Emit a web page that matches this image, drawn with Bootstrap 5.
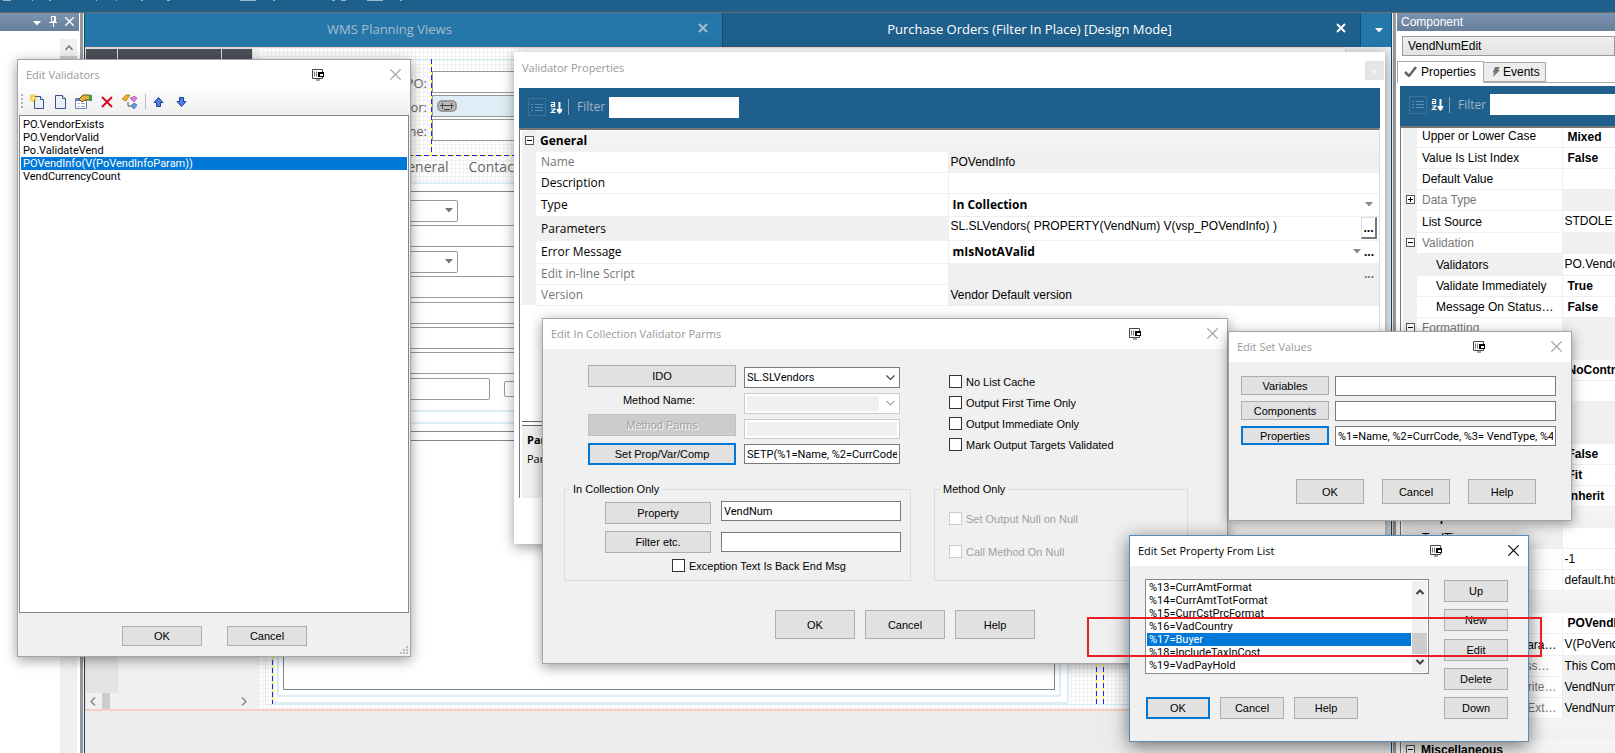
<!DOCTYPE html>
<html lang="en">
<head>
<meta charset="utf-8">
<meta name="viewport" content="width=device-width, initial-scale=1">
<title>Purchase Orders - Design Mode</title>
<link href="https://cdn.jsdelivr.net/npm/bootstrap@5.3.0/dist/css/bootstrap.min.css" rel="stylesheet">
<style>
:root{--navy:#1f5f8b;--tab:#2577aa;--face:#f0f0f0;--sel:#0078d7;--ui:"Open Sans","Noto Sans",sans-serif;--ms:"Liberation Sans",Arial,sans-serif}
body{font-family:var(--ms);font-size:12px;line-height:14px;color:#000;background:#ececec}
button,input,select{font:inherit;color:inherit}
button{line-height:14px}
svg{display:block;flex:none}
a{color:inherit;text-decoration:none}
.seg{font-family:var(--ui);font-size:11px}
/* application frame */
.topbar{height:13px;background:var(--navy);border-bottom:1px solid #6b6b6b}
.pane-left{width:80px;background:#fff}
.pane-right{width:219px;background:#fff}
.splitter{width:3px;background:#999;flex:none}
.pane-head{height:18px;background:linear-gradient(#7a93b1,#687f9a);color:#fff}
.icon-btn{border:0;background:none;padding:0;color:inherit;display:flex}
.side-scroll{width:17px;background:#f0f0f0;margin-left:60px}
.side-thumb{background:#cdcdcd;height:300px}
.work{border-left:1px solid #124a70;border-right:1px solid #124a70;margin:0 1px}
.doc-tabs{height:34px;background:var(--tab);font-family:var(--ui);font-size:13px;line-height:18px;color:#a9bccb}
.doc-tab{flex:1 1 8px;padding-right:14px;padding-bottom:2px}
.doc-tab svg{margin-bottom:2px}
.doc-tab.on{flex-basis:0;background:var(--navy);color:#fff;border-left:1px solid #174c72}
.doc-more{width:31px;border-left:1px solid #174c72;color:#fff;padding:2px 0 0 6px}
/* design surface */
.canvas{margin:0 45px 42px 0;border:1px solid #f9cfc4;border-bottom-width:2px}
.tree{width:173px;background:#f0f0f0}
.tree-head{height:28px;background:#4d4f59;margin-right:6px}
.tree-head i{border-right:1px solid #ddd;border-top:1px solid #ddd}
.tree-gutter{width:32px;background:#e4e4e4}
.tree-scroll{height:16px;color:#888;padding:0 12px 0 4px}
.tree-scroll b{width:8px;background:#cdcdcd;margin-left:6px}
.surface{padding:11px 5px 4px 6px;background:repeating-linear-gradient(90deg,#f2f2f2 0 1px,transparent 1px 4px),repeating-linear-gradient(#f2f2f2 0 1px,#fff 1px 4px)}
.panel-outer{border:1px solid #d2e9f1;border-right:0}
.head-rows{padding-top:11px;height:95px;display:grid;grid-template-columns:161px 400px;column-gap:5px;row-gap:2px;align-content:start}
.head-rows label{font-family:var(--ui);font-size:13px;line-height:20px;padding-top:2px;text-align:right;color:#666}
.line-in{display:block;border:1px solid #999;background:#fff;height:22px;padding:0 4px;border-radius:0}
.line-in.blue{background:#dfeef6}
.form-tabs{font-family:var(--ui);font-size:14px;color:#666;gap:20px;padding-left:131px;height:27px;line-height:24px}
.tab-body{width:797px;margin-left:6px;border:2px solid #dcedf5;border-radius:3px;background:#fff;padding:0 6px 5px 3px}
.group1{border:solid #dcedf5;border-width:0 2px 2px;height:228px;padding:7px 4px 9px}
.group2{border:2px solid #dcedf5;border-radius:3px;margin-top:10px;padding:7px 4px 5px}
.rows{height:200px}
.w-dd{width:175px;border-radius:2px}.w-fd{width:207px;border-radius:2px}
.memo{border:1px solid #7f8590;width:100%;background:#fff;display:block;resize:none}
.guide{position:absolute}
.guide.v{width:1px;background:repeating-linear-gradient(#22f 0 5px,#ff0 5px 8px)}
.guide.h{height:1px;background:repeating-linear-gradient(90deg,#22f 0 5px,#ff0 5px 8px)}
/* windows */
.win{position:absolute;background:var(--face);border:1px solid #a5a5a5;box-shadow:0 3px 12px rgba(0,0,0,.4);font-size:11px}
.win-title{height:30px;background:#fff;color:#999;padding:0 9px 1px 8px}
.win-title h2{font:inherit;margin:0;flex:1}
.win-title .sysicon{margin-right:66px}
.active-win{border-color:#5b8ab5;box-shadow:0 4px 18px rgba(0,0,0,.55)}
.active-win .win-title{color:#000}
.btn-w{border:1px solid #adadad;border-radius:0;background:#e1e1e1;padding:0;text-align:center;height:22px;display:block;white-space:nowrap}
.btn-w.focus{border:2px solid var(--sel)}
.btn-w:disabled{background:#ccc;border-color:#bfbfbf;color:#a0a0a0;text-shadow:1px 1px 0 #fff}
.txt{border:1px solid #7a7a7a;border-radius:0;background:#fff;height:20px;padding:0 2px;display:block;min-width:0}
.txt:disabled{background:#f0f0f0;border-color:#ccc;box-shadow:inset 0 0 0 2px #fff}
.txt,.lst .list-group-item{font-family:Roboto,var(--ms)}
.combo{appearance:none;height:21px;background:#fff url("data:image/svg+xml,%3Csvg xmlns='http://www.w3.org/2000/svg' width='9' height='6'%3E%3Cpath d='M.5.5l4 4 4-4' fill='none' stroke='%23444' stroke-width='1.2'/%3E%3C/svg%3E") no-repeat right 4px center}
.combo:disabled{opacity:1;background:#f0f0f0 url("data:image/svg+xml,%3Csvg xmlns='http://www.w3.org/2000/svg' width='20' height='19'%3E%3Cpath fill='%23fff' d='M0 0h20v19H0z'/%3E%3Cpath d='M7.500 7l4 4 4-4' fill='none' stroke='%23aaa' stroke-width='1.2'/%3E%3C/svg%3E") no-repeat right center}
.chk{display:flex;align-items:center;gap:4px;height:13px;white-space:nowrap}
.chk input{appearance:none;width:13px;height:13px;border:1px solid #333;background:#fff;margin:0}
.chk.off{color:#a0a0a0}.chk.off input{border-color:#ccc}
.lst{background:#fff;border:1px solid #828790;border-radius:0}
.lst .list-group-item{border:0;border-radius:0!important;padding:0 2px;margin:0!important;height:13px;line-height:13px;color:#000;background:none;font-size:11px;white-space:nowrap}
.lst .list-group-item.active{background:var(--sel);color:#fff}
.grp{border:1px solid #dcdcdc;height:99px;padding:0;margin:0}
.grp legend{float:none;width:auto;font-size:11px;line-height:14px;margin:0 0 0 5px;padding:0 3px;height:14px}
.w80{width:80px}.w68{width:68px}.w64{width:64px}.w88{width:88px}.w106{width:106px}
.h20{height:20px}.h25{height:25px}.h29{height:29px}.h19{height:19px}
/* validators window */
#w-val{left:17px;top:59px;width:394px}
.strip{height:25px;background:linear-gradient(#fbfbfb,#efefef);padding:0 0 2px 3px}
.strip .grip{width:2px;height:16px;background:repeating-linear-gradient(#b5b5b5 0 2px,transparent 2px 4px)}
.strip .sep{width:1px;height:15px;background:#bbb}
.val-list{min-height:498px;margin:0 1px;padding:2px 1px}
.val-foot{padding:13px 0 10px 104px;gap:25px}
.sizer{position:absolute;right:2px;bottom:2px}
/* validator properties */
#w-prop{left:514px;top:52px;width:871px;border:0;background:#fff;padding:0 5px 46px;font-size:12px}
.prop-title{height:36px;color:#999;padding:0 0 4px 3px;margin-right:-4px}
.xbox{width:19px;height:19px;background:#e5e5e5;color:#fff;border:0;padding:0;line-height:17px;font-size:11px;margin-top:4px}
.filterbar{height:40px;background:var(--navy);color:#9fb6c8;padding:0 0 2px 9px;flex:none}
.filterbar > *{flex:none}
.filterbar label{font-family:var(--ui);font-size:12px;margin:0 5px 0 8px;width:27px}
.filterbar .vr{width:1px;min-height:16px;align-self:center;background:#8aa5ba;opacity:1;margin-left:5px}
.filterbar .box{width:18px;height:18px;border:1px solid #3a7199;display:grid;place-items:center}
.filterbar input{border:0;height:21px;width:130px;background:#fff;padding:0 3px}
.pg{border:solid #777;border-width:2px 0 0 1px;padding-left:2px}
.pg table{table-layout:fixed;width:100%;border-collapse:collapse;line-height:14px}
.pg td,.pg th{height:21px;padding:1px 5px 0;font-weight:400;white-space:nowrap;overflow:hidden;border-bottom:1px solid #efefef;background:#fff}
.pg th.g{background:#f0f0f0;border:0;padding:0 0 0 3px}
.pg td{border-left:1px solid #efefef;padding:0 2px}
.pg .t > *{height:22px}
.pg .t3 > *{height:23px}
.pg .tt > *{height:24px}
.pg .dim > th{color:#777}
.pg .ro > td{background:#f0f0f0}
.pg .hd > *{background:linear-gradient(#f6f6f6,#f0f0f0);border-color:#f0f0f0}
.pg .hd > th:not(.g){padding-left:4px}
.pg .cur > th:not(.g){background:#f0f0f0}
.pg td b{padding-left:2px}
.pane-right td b{padding-left:3px}
.pg .sub{padding-left:19px}
.pg .first > *{height:18px}
.pm{width:9px;height:9px;border:1px solid #555;background:linear-gradient(#000,#000) center/5px 1px no-repeat #fff;display:block;padding:0}
.pm.plus{background:linear-gradient(#000,#000) center/5px 1px no-repeat,linear-gradient(#000,#000) center/1px 5px no-repeat #fff}
.seg-t th,.seg-t td b{font-family:var(--ui);font-size:12px}
.seg-t .ends{padding-right:2px}
.dots{font-weight:700;border:0;background:none;padding:0;width:16px;line-height:12px;align-self:stretch}
.dots.up{border:1px solid #ddd;border-right:2px solid #777;border-bottom:2px solid #777;background:#fff;height:22px}
.helpbox{background:#f0f0f0;border-top:1px solid #666;height:73px;padding:4px 5px;line-height:19px;font-size:11px;font-family:var(--ui)}
.helpgap{margin-top:115px;height:4px;border-top:1px solid #666}
/* collection parms, set values, property list */
#w-parm{left:542px;top:318px;width:686px}
#w-set{left:1228px;top:331px;width:344px}
#w-list{left:1129px;top:535px;width:400px}
.callout{position:absolute;left:1087px;top:617px;width:455px;height:40px;border:2px solid #ec1c24;pointer-events:none}
.col-scroll{width:15px;background:#f0f0f0}
/* component pane */
.comp-sel{appearance:none;height:20px;border:1px solid #999;border-radius:0;background:linear-gradient(#f0f0f0,#e2e2e2);width:100%;padding:0 5px}
.ptab{border:1px solid #aaa;padding:0 5px;height:20px;background:#ededed;align-self:end;white-space:nowrap}
.ptab.on{height:22px;background:#fff;border-bottom-color:#fff}
</style>
</head>
<body class="vh-100 overflow-hidden d-flex flex-column position-relative">
<svg width="0" height="0" class="position-absolute">
 <symbol id="i-sys" viewBox="0 0 12 12"><path d="M.5.500h10v9H.5zM4 11h4" fill="none" stroke="#444"/><path d="M2.500 2.500v5M4.500 2.500v5" stroke="#777"/><path d="M6 3h6v5H6z" fill="#000"/><path d="M8 5h3v2H8z" fill="#fff"/></symbol>
 <symbol id="i-x" viewBox="0 0 10 10"><path d="M.3.300l9.400 9.400M9.700.300L.3 9.700" stroke="currentColor" fill="none"/></symbol>
 <symbol id="i-list" viewBox="0 0 12 9"><path d="M0 1.500h2M4 1.500h8M0 4.500h2M4 4.500h8M0 7.500h2M4 7.500h8" stroke="#5e8fb3"/></symbol>
 <symbol id="i-az" viewBox="0 0 12 13"><path d="M.5 1.500h3.500v4H1V3.500h3M.5 8h4L1 11.500h4" fill="none" stroke="#fff" stroke-width="1.200"/><path d="M9 1v7" stroke="#fff" stroke-width="2"/><path d="M6 8h6l-1 3-2 2-2-2z" fill="#fff"/></symbol>
 <symbol id="i-tri" viewBox="0 0 8 5"><path d="M0 0h8L4 4.500z" fill="currentColor"/></symbol>
</svg>

<header class="topbar">
 <svg width="420" height="1" fill="#9bb4c7"><path d="M3 0h8v1H3zM32 0h1v1h-1zM49 0h2v1h-2zM96 0h1v1h-1zM116 0h1v1h-1zM141 0h2v1h-2zM167 0h3v1h-3zM240 0h16v1h-16zM273 0h2v1h-2zM332 0h3v1h-3zM341 0h5v1h-5zM367 0h16v1h-16zM400 0h2v1h-2z"/></svg>
</header>

<div class="d-flex flex-grow-1" style="min-height:0">
 <aside class="pane-left d-flex flex-column flex-shrink-0">
  <div class="pane-head d-flex align-items-center justify-content-end gap-2" style="padding-right:5px;margin-right:1px">
   <button class="icon-btn" aria-label="Menu"><svg width="8" height="5" class="mt-1"><use href="#i-tri"/></svg></button>
   <button class="icon-btn" aria-label="Pin"><svg width="8" height="11" fill="none" stroke="#fff"><path d="M2.500.5h4v5h-4zM5.500 1v4M0 6.500h8M4.500 7v4"/></svg></button>
   <button class="icon-btn" aria-label="Close pane"><svg width="9" height="9" viewBox="0 0 10 10" stroke-width="1.500"><use href="#i-x"/></svg></button>
  </div>
  <div class="side-scroll flex-grow-1 mt-2">
   <div class="d-flex justify-content-center" style="height:17px;padding-top:6px"><svg width="8" height="6" fill="none" stroke="#777" stroke-width="1.500"><path d="M.5 5L4 1l3.500 4"/></svg></div>
   <div class="side-thumb"></div>
  </div>
 </aside>
 <div class="splitter"></div>

 <main class="work flex-grow-1 d-flex flex-column" style="min-width:0">
  <nav class="doc-tabs d-flex">
   <div class="doc-tab d-flex align-items-center">
    <a href="#" class="flex-fill text-center pe-1">WMS Planning Views</a>
    <button class="icon-btn" aria-label="Close tab"><svg width="10" height="10" viewBox="0 0 10 10" fill="none" stroke="currentColor" stroke-width="2"><path d="M1 1l8 8M9 1L1 9"/></svg></button>
   </div>
   <div class="doc-tab on d-flex align-items-center">
    <a href="#" class="flex-fill text-center">Purchase Orders (Filter In Place) [Design Mode]</a>
    <button class="icon-btn" aria-label="Close tab"><svg width="10" height="10" viewBox="0 0 10 10" fill="none" stroke="currentColor" stroke-width="2"><path d="M1 1l8 8M9 1L1 9"/></svg></button>
   </div>
   <div class="doc-more d-flex align-items-center justify-content-center"><button class="icon-btn" aria-label="More tabs"><svg width="8" height="5"><use href="#i-tri"/></svg></button></div>
  </nav>

  <div class="canvas flex-grow-1 d-flex" style="min-height:0">
   <div class="tree d-flex flex-column">
    <div class="tree-head d-flex"><i style="width:32px"></i><i style="width:104px"></i><i class="flex-fill"></i></div>
    <div class="flex-grow-1 d-flex"><div class="tree-gutter"></div></div>
    <div class="tree-scroll d-flex align-items-center">
     <svg width="6" height="9" fill="none" stroke="currentColor" stroke-width="1.500"><path d="M5 .5L1 4.500l4 4"/></svg><b class="align-self-stretch"></b>
     <svg class="ms-auto" width="6" height="9" fill="none" stroke="currentColor" stroke-width="1.500"><path d="M1 .5l4 4-4 4"/></svg>
    </div>
   </div>
   <div class="surface flex-grow-1 position-relative d-flex flex-column">
    <div class="panel-outer flex-grow-1 d-flex flex-column">
     <div class="head-rows">
      <label for="f-po">PO:</label><input id="f-po" class="line-in">
      <label for="f-vendor">Vendor:</label><div class="line-in blue" id="f-vendor"><svg width="20" height="12" class="mt-1"><rect x="1" y="1" width="18" height="10" rx="4" fill="#bbb" stroke="#999" stroke-width="2"/><path d="M3 5.500h14M5.500 3v6M14.500 3v6M7 9.500h6" stroke="#444" fill="none"/></svg></div>
      <label for="f-name">Name:</label><input id="f-name" class="line-in">
     </div>
     <div class="form-tabs d-flex"><a href="#">General</a><a href="#">Contacts</a></div>
     <div class="tab-body flex-grow-1 d-flex flex-column">
      <div class="group1">
       <div style="border-top:1px solid #888;height:9px"></div>
       <div class="rows d-flex flex-column justify-content-between">
        <div class="line-in w-dd d-flex align-items-center justify-content-end text-secondary"><svg width="8" height="5"><use href="#i-tri"/></svg></div>
        <div class="line-in"></div>
        <div class="line-in w-dd d-flex align-items-center justify-content-end text-secondary"><svg width="8" height="5"><use href="#i-tri"/></svg></div>
        <div class="line-in"></div><div class="line-in"></div><div class="line-in"></div><div class="line-in"></div>
        <div class="d-flex align-items-center" style="gap:14px"><div class="line-in w-fd"></div><div class="line-in w-fd" style="height:16px"></div></div>
       </div>
      </div>
      <div class="group2 flex-grow-1 d-flex flex-column"><div style="border-top:1px solid #888;height:9px"></div><textarea class="memo flex-grow-1" aria-label="Notes"></textarea></div>
     </div>
    </div>
    <i class="guide v" style="left:172px;top:11px;height:97px"></i>
    <i class="guide h" style="left:13px;top:107px;right:100px"></i>
    <i class="guide v" style="left:13px;top:108px;bottom:5px"></i>
    <i class="guide v" style="left:837px;top:11px;bottom:5px"></i>
    <i class="guide v" style="left:844px;top:11px;bottom:5px"></i>
   </div>
  </div>
 </main>

 <div class="splitter"></div>
 <aside class="pane-right d-flex flex-column flex-shrink-0 overflow-hidden">
  <div class="pane-head" style="margin-left:1px;padding:2px 4px">Component</div>
  <div style="padding:5px 0 0 6px"><select class="comp-sel" aria-label="Component"><option>VendNumEdit</option></select></div>
  <div class="d-flex" style="margin:4px 0 3px 1px;border-bottom:1px solid #aaa;height:23px">
   <a href="#" class="ptab on d-flex align-items-center gap-1" style="margin-bottom:-1px;width:87px;padding:0 6px"><svg width="13" height="11" fill="none" stroke="#666" stroke-width="2.500"><path d="M1 6l4 4 7-9"/></svg>Properties</a>
   <a href="#" class="ptab d-flex align-items-center" style="width:63px;margin-left:-1px;padding:0 7px;gap:2px"><svg width="10" height="10" viewBox="0 0 10 10"><path d="M4 0h5L7 3h2L2 10l1-4H1l3-1H2z" fill="#777"/></svg>Events</a>
  </div>
  <div class="filterbar d-flex align-items-center" style="margin-left:4px">
   <span class="box"><svg width="12" height="9"><use href="#i-list"/></svg></span><svg class="ms-1" width="13" height="13"><use href="#i-az"/></svg><span class="vr"></span>
   <label for="flt2">Filter</label><input id="flt2" type="text">
  </div>
  <div class="pg flex-grow-1 overflow-hidden" style="margin-left:4px">
   <table>
    <colgroup><col style="width:14px"><col style="width:145px"><col></colgroup>
    <tbody>
    <tr class="first"><th class="g"></th><th class="pb-1">Upper or Lower Case</th><td><b>Mixed</b></td></tr>
    <tr><th class="g"></th><th>Value Is List Index</th><td><b>False</b></td></tr>
    <tr><th class="g"></th><th>Default Value</th><td></td></tr>
    <tr class="dim ro"><th class="g"><button class="pm plus" aria-label="Expand"></button></th><th>Data Type</th><td></td></tr>
    <tr class="t"><th class="g"></th><th>List Source</th><td>STDOLE</td></tr>
    <tr class="dim ro"><th class="g"><button class="pm" aria-label="Collapse"></button></th><th>Validation</th><td></td></tr>
    <tr class="t cur"><th class="g"></th><th class="sub">Validators</th><td>PO.VendorExists</td></tr>
    <tr><th class="g"></th><th class="sub">Validate Immediately</th><td><b>True</b></td></tr>
    <tr><th class="g"></th><th class="sub">Message On Status…</th><td><b>False</b></td></tr>
    <tr class="dim ro"><th class="g"><button class="pm" aria-label="Collapse"></button></th><th>Formatting</th><td></td></tr>
    <tr class="ro"><th class="g"></th><th></th><td></td></tr>
    <tr><th class="g"></th><th></th><td><b>NoControl</b></td></tr>
    <tr><th class="g"></th><th></th><td></td></tr>
    <tr class="ro"><th class="g"></th><th></th><td></td></tr>
    <tr class="ro"><th class="g"></th><th></th><td></td></tr>
    <tr><th class="g"></th><th></th><td><b>False</b></td></tr>
    <tr><th class="g"></th><th></th><td><b>Fit</b></td></tr>
    <tr><th class="g"></th><th></th><td><b>Inherit</b></td></tr>
    <tr class="hd"><th class="g"><button class="pm" aria-label="Collapse"></button></th><th><b>Help</b></th><td></td></tr>
    <tr class="cur"><th class="g"></th><th>ToolTip</th><td></td></tr>
    <tr><th class="g"></th><th></th><td>-1</td></tr>
    <tr><th class="g"></th><th></th><td>default.html</td></tr>
    <tr class="hd t"><th class="g"></th><th></th><td></td></tr>
    <tr><th class="g"></th><th></th><td><b>POVendInfo</b></td></tr>
    <tr class="t"><th class="g"></th><th class="text-end">ara…</th><td>V(PoVendInfo</td></tr>
    <tr class="dim ro"><th class="g"></th><th class="text-end" style="padding-right:12px">ss…</th><td>This Component</td></tr>
    <tr class="dim ro"><th class="g"></th><th class="text-end">rite…</th><td>VendNum</td></tr>
    <tr class="dim ro"><th class="g"></th><th class="text-end">Ext…</th><td>VendNum</td></tr>
    <tr class="hd"><th class="g"></th><th></th><td></td></tr>
    <tr class="hd"><th class="g"><button class="pm" aria-label="Collapse"></button></th><th colspan="2"><b>Miscellaneous</b></th></tr>
    </tbody>
   </table>
  </div>
 </aside>
</div>

<!-- Validator Properties -->
<section class="win" id="w-prop">
 <div class="prop-title seg d-flex align-items-center"><h2 class="m-0 flex-fill" style="font:inherit">Validator Properties</h2><button class="xbox" aria-label="Close">x</button></div>
 <div class="filterbar d-flex align-items-center">
  <span class="box"><svg width="12" height="9"><use href="#i-list"/></svg></span><svg class="ms-1" width="13" height="13"><use href="#i-az"/></svg><span class="vr"></span>
  <label for="flt1">Filter</label><input id="flt1" type="text">
 </div>
 <div class="pg" style="border-right:1px solid #ddd">
  <table class="seg-t">
   <colgroup><col style="width:14px"><col style="width:412px"><col></colgroup>
   <tbody>
   <tr class="hd"><th class="g"><button class="pm" aria-label="Collapse"></button></th><th colspan="2"><b>General</b></th></tr>
   <tr class="dim ro"><th class="g"></th><th>Name</th><td>POVendInfo</td></tr>
   <tr><th class="g"></th><th>Description</th><td></td></tr>
   <tr class="t3"><th class="g"></th><th>Type</th><td class="ends"><div class="d-flex align-items-center"><b class="flex-fill">In Collection</b><svg class="me-1" width="8" height="5" color="#888"><use href="#i-tri"/></svg></div></td></tr>
   <tr class="tt cur"><th class="g"></th><th>Parameters</th><td class="ends"><div class="d-flex align-items-center"><span class="flex-fill pb-1">SL.SLVendors( PROPERTY(VendNum) V(vsp_POVendInfo) )</span><button class="dots up">...</button></div></td></tr>
   <tr class="t3"><th class="g"></th><th>Error Message</th><td class="ends"><div class="d-flex align-items-center"><b class="flex-fill">mIsNotAValid</b><svg width="8" height="5" color="#888"><use href="#i-tri"/></svg><button class="dots">...</button></div></td></tr>
   <tr class="dim ro"><th class="g"></th><th>Edit in-line Script</th><td class="ends text-end"><button class="dots text-secondary">...</button></td></tr>
   <tr class="dim ro"><th class="g"></th><th>Version</th><td>Vendor Default version</td></tr>
   </tbody>
  </table>
  <div class="helpgap"></div>
  <div class="helpbox"><b>Parameters</b><br>Parameters</div>
 </div>
</section>

<!-- Edit Validators -->
<section class="win" id="w-val">
 <div class="win-title seg d-flex align-items-center"><h2>Edit Validators</h2><svg class="sysicon" width="12" height="12"><use href="#i-sys"/></svg><button class="icon-btn" aria-label="Close"><svg width="11" height="11"><use href="#i-x"/></svg></button></div>
 <div class="strip d-flex align-items-center">
  <span class="grip"></span>
  <button class="icon-btn" style="margin-left:6px" aria-label="New from wizard"><svg width="16" height="16"><path d="M5.500 2.500h6l3 3v9h-9z" fill="#e8f0fa" stroke="#3a5382"/><path d="M11.500 2.500v3h3" fill="#fff" stroke="#3a5382"/><path d="M4 0v8M0 4h8M1 1l6 6M7 1L1 7" stroke="#f0c020" stroke-width="1.200"/><circle cx="4" cy="4" r="1.500" fill="#fff3a0"/></svg></button>
  <button class="icon-btn" style="margin-left:8px" aria-label="New"><svg width="16" height="16"><path d="M2.500 1.500h7l3 3v10h-10z" fill="#e8f0fa" stroke="#3a5382"/><path d="M9.500 1.500v3h3" fill="#fff" stroke="#3a5382"/></svg></button>
  <button class="icon-btn" style="margin-left:6px" aria-label="Properties"><svg width="17" height="16"><path d="M.5 4.500h11v10H.5z" fill="#fff" stroke="#6a83ad"/><path d="M1 5h11v2H1z" fill="#5a86c8"/><path d="M2.500 9.500h2M6 9.500h4M2.500 12.500h2M6 12.500h4" stroke="#8aa5cf"/><path d="M4 5l4-4h7v5H10L7 8z" fill="#e0b23c" stroke="#6b5420"/><path d="M14 1h3v6h-3z" fill="#3d9a4a"/></svg></button>
  <button class="icon-btn" style="margin-left:9px" aria-label="Delete"><svg width="12" height="12"><path d="M1 1l10 10M11 1L1 11" stroke="#d9001b" stroke-width="1.800"/></svg></button>
  <button class="icon-btn" style="margin-left:9px" aria-label="Hierarchy"><svg width="16" height="16"><path d="M6 8v4h4M8 4h4" stroke="#555" fill="none"/><path d="M0 5l4-4h4L4 7z" fill="#f0b429" stroke="#a06d10" stroke-width=".7"/><path d="M9 5l3-3 3 2-3 4z" fill="#e37fe0" stroke="#a040a0" stroke-width=".7"/><path d="M9 12l3-3 3 2-3 4z" fill="#6a9be8" stroke="#2a5ab0" stroke-width=".7"/></svg></button>
  <span class="sep" style="margin-left:7px"></span>
  <button class="icon-btn" style="margin-left:7px" aria-label="Move up"><svg width="11" height="10"><path d="M5.500.5l4.500 5H7.500v4h-4v-4H1z" fill="#4f7fe0" stroke="#1e429a"/></svg></button>
  <button class="icon-btn" style="margin-left:12px" aria-label="Move down"><svg width="11" height="10"><path d="M5.500 9.500l4.500-5H7.500v-4h-4v4H1z" fill="#4f7fe0" stroke="#1e429a"/></svg></button>
 </div>
 <ul class="lst list-group val-list">
  <li class="list-group-item">PO.VendorExists</li><li class="list-group-item">PO.VendorValid</li><li class="list-group-item">Po.ValidateVend</li><li class="list-group-item active">POVendInfo(V(PoVendInfoParam))</li><li class="list-group-item">VendCurrencyCount</li>
 </ul>
 <div class="val-foot d-flex"><button class="btn-w w80 h20">OK</button><button class="btn-w w80 h20">Cancel</button></div>
 <svg class="sizer" width="8" height="8" fill="#bbb"><path d="M6 0h2v2H6zM3 3h2v2H3zM6 3h2v2H6zM0 6h2v2H0zM3 6h2v2H3zM6 6h2v2H6z"/></svg>
</section>

<!-- Edit In Collection Validator Parms -->
<section class="win" id="w-parm">
 <div class="win-title seg d-flex align-items-center"><h2>Edit In Collection Validator Parms</h2><svg class="sysicon" width="12" height="12"><use href="#i-sys"/></svg><button class="icon-btn" aria-label="Close"><svg width="11" height="11"><use href="#i-x"/></svg></button></div>
 <div class="d-flex" style="padding:16px 0 0 45px">
  <div style="width:148px">
   <button class="btn-w w-100">IDO</button>
   <label for="mname" class="d-block text-center" style="line-height:27px;padding-right:6px">Method Name:</label>
   <button class="btn-w w-100" disabled>Method Parms</button>
   <button class="btn-w w-100 focus" style="margin-top:7px">Set Prop/Var/Comp</button>
  </div>
  <div class="d-flex flex-column ms-2" style="width:156px;gap:5px;padding-top:2px">
   <select class="txt combo" aria-label="IDO"><option>SL.SLVendors</option></select>
   <select class="txt combo" id="mname" disabled><option></option></select>
   <input class="txt" disabled aria-label="Method parms">
   <input class="txt" value="SETP(%1=Name, %2=CurrCode" aria-label="Set">
  </div>
  <div class="d-flex flex-column" style="margin:10px 0 0 49px;gap:8px">
   <label class="chk"><input type="checkbox">No List Cache</label>
   <label class="chk"><input type="checkbox">Output First Time Only</label>
   <label class="chk"><input type="checkbox">Output Immediate Only</label>
   <label class="chk"><input type="checkbox">Mark Output Targets Validated</label>
  </div>
 </div>
 <div class="d-flex" style="padding:17px 0 0 21px;gap:23px">
  <fieldset class="grp" style="width:347px"><legend>In Collection Only</legend>
   <div class="d-flex" style="padding:5px 0 0 40px">
    <div class="d-flex flex-column" style="gap:7px;padding-top:1px"><button class="btn-w w106">Property</button><button class="btn-w w106">Filter etc.</button></div>
    <div class="d-flex flex-column" style="gap:11px;margin-left:10px;width:180px"><input class="txt" value="VendNum" aria-label="Property"><input class="txt" aria-label="Filter"></div>
   </div>
   <label class="chk" style="margin:6px 0 0 107px"><input type="checkbox">Exception Text Is Back End Msg</label>
  </fieldset>
  <fieldset class="grp" style="width:254px"><legend>Method Only</legend>
   <div class="d-flex flex-column" style="padding:16px 0 0 14px;gap:20px">
    <label class="chk off"><input type="checkbox" disabled>Set Output Null on Null</label>
    <label class="chk off"><input type="checkbox" disabled>Call Method On Null</label>
   </div>
  </fieldset>
 </div>
 <div class="d-flex" style="padding:29px 0 24px 232px;gap:10px"><button class="btn-w w80 h29">OK</button><button class="btn-w w80 h29">Cancel</button><button class="btn-w w80 h29">Help</button></div>
</section>

<!-- Edit Set Values -->
<section class="win" id="w-set">
 <div class="win-title seg d-flex align-items-center"><h2>Edit Set Values</h2><svg class="sysicon" width="12" height="12"><use href="#i-sys"/></svg><button class="icon-btn" aria-label="Close"><svg width="11" height="11"><use href="#i-x"/></svg></button></div>
 <div class="d-flex flex-column" style="padding:14px 15px 0 12px;gap:5px">
  <div class="d-flex" style="gap:6px"><button class="btn-w w88 h19">Variables</button><input class="txt flex-fill" aria-label="Variables"></div>
  <div class="d-flex" style="gap:6px"><button class="btn-w w88 h19">Components</button><input class="txt flex-fill" aria-label="Components"></div>
  <div class="d-flex" style="gap:6px"><button class="btn-w w88 h19 focus">Properties</button><input class="txt flex-fill" aria-label="Properties" value="%1=Name, %2=CurrCode, %3= VendType, %4"></div>
 </div>
 <div class="d-flex" style="padding:33px 0 16px 67px;gap:18px"><button class="btn-w w68 h25">OK</button><button class="btn-w w68 h25">Cancel</button><button class="btn-w w68 h25">Help</button></div>
</section>

<!-- Edit Set Property From List -->
<section class="win active-win" id="w-list">
 <div class="win-title seg d-flex align-items-center"><h2>Edit Set Property From List</h2><svg class="sysicon" width="12" height="12"><use href="#i-sys"/></svg><button class="icon-btn" aria-label="Close"><svg width="11" height="11"><use href="#i-x"/></svg></button></div>
 <div class="d-flex" style="padding:13px 0 22px 15px;gap:15px">
  <div class="d-flex flex-column justify-content-between" style="width:284px">
   <div class="lst d-flex" style="padding:1px">
    <ul class="list-group flex-fill">
     <li class="list-group-item">%13=CurrAmtFormat</li><li class="list-group-item">%14=CurrAmtTotFormat</li><li class="list-group-item">%15=CurrCstPrcFormat</li><li class="list-group-item">%16=VadCountry</li><li class="list-group-item active">%17=Buyer</li><li class="list-group-item">%18=IncludeTaxInCost</li><li class="list-group-item">%19=VadPayHold</li>
    </ul>
    <div class="col-scroll d-flex flex-column align-items-center" style="margin-left:1px">
     <svg class="mt-2" width="8" height="6" fill="none" stroke="#444" stroke-width="2"><path d="M.5 5L4 1.500 7.500 5"/></svg>
     <div class="w-100 mt-auto" style="height:21px;background:#cdcdcd"></div>
     <svg style="margin:5px 0 7px" width="8" height="6" fill="none" stroke="#444" stroke-width="2"><path d="M.5 1L4 4.500 7.500 1"/></svg>
    </div>
   </div>
   <div class="d-flex" style="gap:10px;padding-left:1px"><button class="btn-w w64 focus">OK</button><button class="btn-w w64">Cancel</button><button class="btn-w w64">Help</button></div>
  </div>
  <div class="d-flex flex-column justify-content-between" style="height:140px;padding-top:1px"><button class="btn-w w64">Up</button><button class="btn-w w64">New</button><button class="btn-w w64">Edit</button><button class="btn-w w64">Delete</button><button class="btn-w w64">Down</button></div>
 </div>
</section>
<div class="callout"></div>
<script src="https://cdn.jsdelivr.net/npm/bootstrap@5.3.0/dist/js/bootstrap.bundle.min.js"></script>
</body>
</html>
